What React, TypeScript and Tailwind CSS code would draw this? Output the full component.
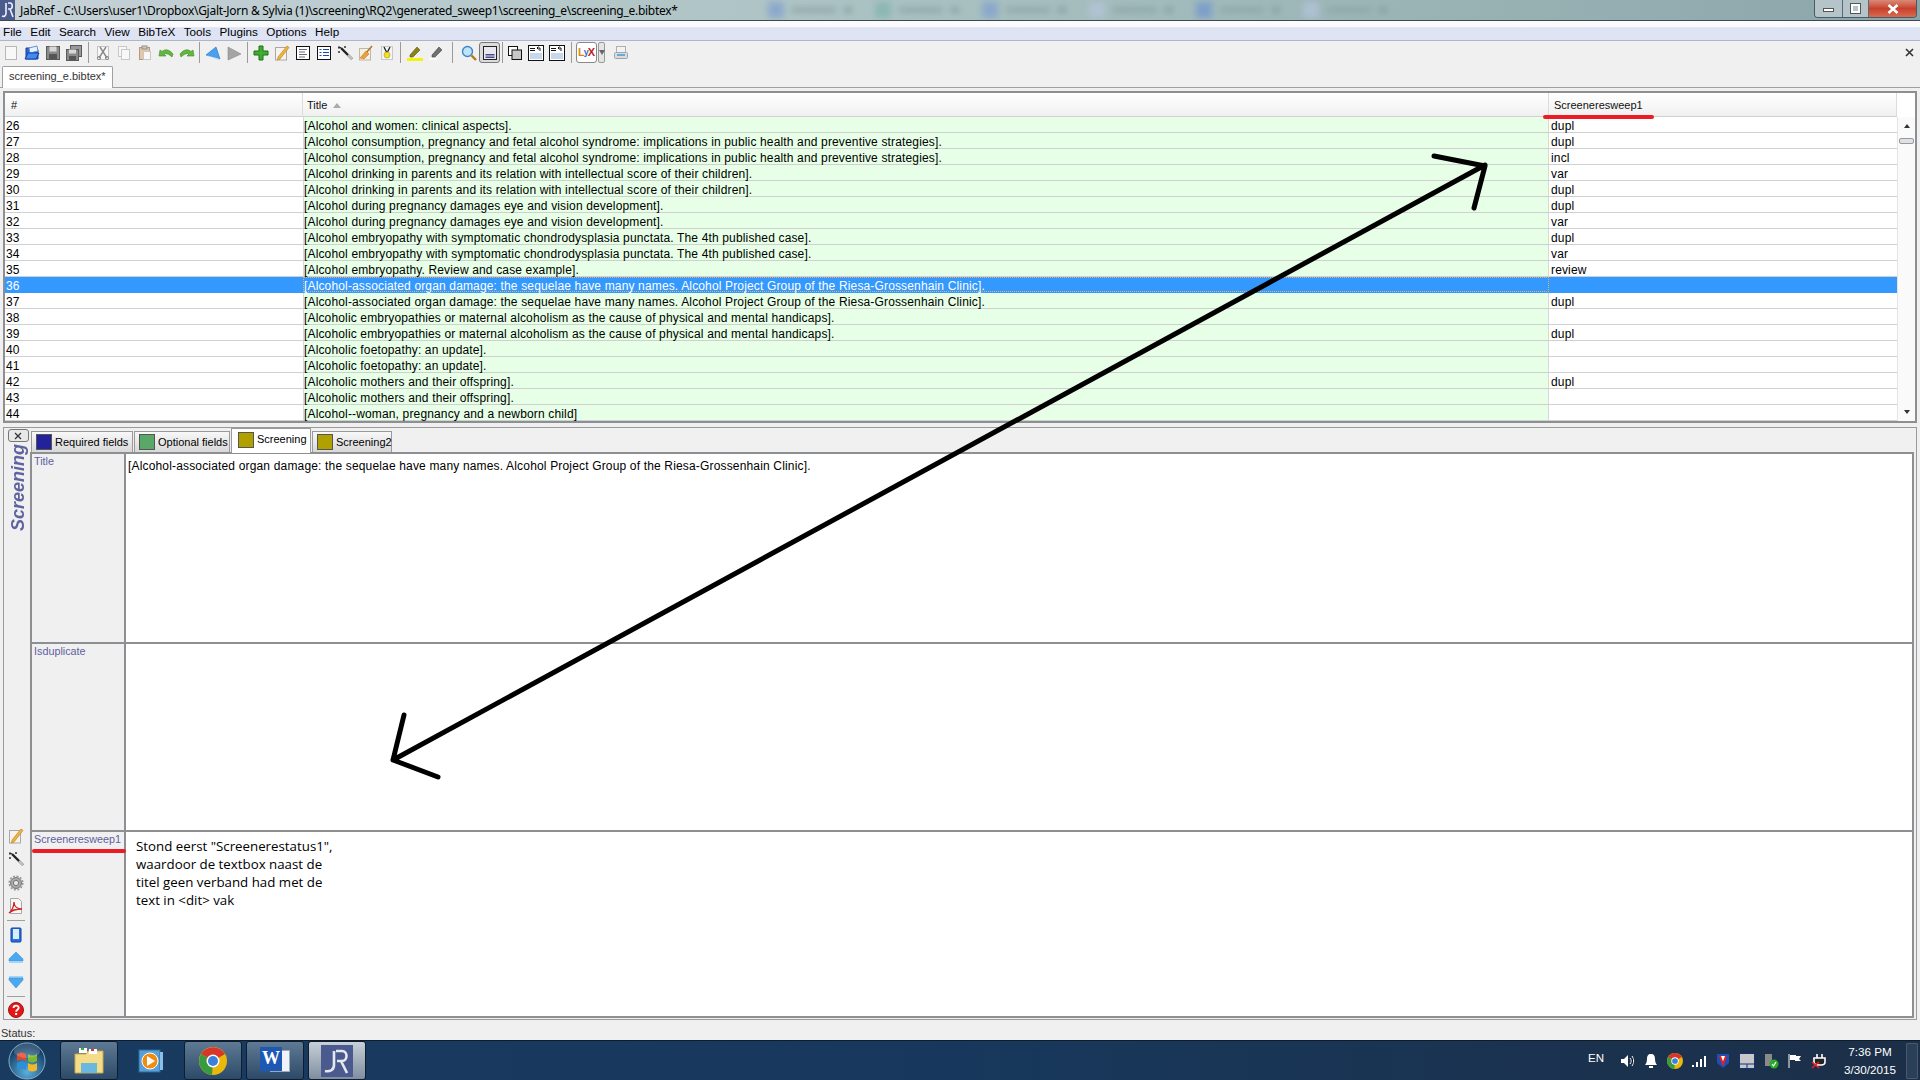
import type { ReactNode } from "react";

// Table rows: number, title and the Screeneresweep1 value
const rows: [number, string, string][] = [
  [26, "[Alcohol and women: clinical aspects].", "dupl"],
  [27, "[Alcohol consumption, pregnancy and fetal alcohol syndrome: implications in public health and preventive strategies].", "dupl"],
  [28, "[Alcohol consumption, pregnancy and fetal alcohol syndrome: implications in public health and preventive strategies].", "incl"],
  [29, "[Alcohol drinking in parents and its relation with intellectual score of their children].", "var"],
  [30, "[Alcohol drinking in parents and its relation with intellectual score of their children].", "dupl"],
  [31, "[Alcohol during pregnancy damages eye and vision development].", "dupl"],
  [32, "[Alcohol during pregnancy damages eye and vision development].", "var"],
  [33, "[Alcohol embryopathy with symptomatic chondrodysplasia punctata. The 4th published case].", "dupl"],
  [34, "[Alcohol embryopathy with symptomatic chondrodysplasia punctata. The 4th published case].", "var"],
  [35, "[Alcohol embryopathy. Review and case example].", "review"],
  [36, "[Alcohol-associated organ damage: the sequelae have many names. Alcohol Project Group of the Riesa-Grossenhain Clinic].", ""],
  [37, "[Alcohol-associated organ damage: the sequelae have many names. Alcohol Project Group of the Riesa-Grossenhain Clinic].", "dupl"],
  [38, "[Alcoholic embryopathies or maternal alcoholism as the cause of physical and mental handicaps].", ""],
  [39, "[Alcoholic embryopathies or maternal alcoholism as the cause of physical and mental handicaps].", "dupl"],
  [40, "[Alcoholic foetopathy: an update].", ""],
  [41, "[Alcoholic foetopathy: an update].", ""],
  [42, "[Alcoholic mothers and their offspring].", "dupl"],
  [43, "[Alcoholic mothers and their offspring].", ""],
  [44, "[Alcohol--woman, pregnancy and a newborn child]", ""],
];

const menus = ["File", "Edit", "Search", "View", "BibTeX", "Tools", "Plugins", "Options", "Help"];

// Small wrapper so every drawn icon shares one 16x16 grid
function Ico({ children, size = 16 }: { children: ReactNode; size?: number }) {
  return (
    <svg width={size} height={size} viewBox="0 0 16 16" fill="none">
      {children}
    </svg>
  );
}

const Sheet = ({ x = 2.5, y = 1.5, w = 11, h = 13, c = "#b8b8b8", f = "#f8f8f8" }) => (
  <rect x={x} y={y} width={w} height={h} fill={f} stroke={c} />
);

const icons = {
  newFile: <Sheet />,
  open: (
    <>
      <path d="M2 3h5l1 2h6v9H2z" fill="#2a66d8" stroke="#1a3fa0" />
      <path d="M5 3l8-2 1 5-8 2z" fill="#e8f2ff" stroke="#6a90d0" />
      <path d="M4 8h11l-3 6H1z" fill="#3d8cf0" stroke="#1a3fa0" />
    </>
  ),
  save: (
    <>
      <rect x="1.5" y="1.5" width="13" height="13" fill="#8a8a8a" stroke="#5a5a5a" />
      <rect x="4.5" y="1.5" width="7" height="5" fill="#d8d8d8" />
      <rect x="4" y="9" width="8" height="5" fill="#555" />
    </>
  ),
  saveAll: (
    <>
      <rect x="4.5" y="0.5" width="11" height="11" fill="#999" stroke="#5a5a5a" />
      <rect x="0.5" y="4.5" width="12" height="11" fill="#8a8a8a" stroke="#5a5a5a" />
      <rect x="3" y="4.5" width="7" height="4" fill="#d8d8d8" />
      <rect x="3" y="11" width="7" height="4" fill="#555" />
    </>
  ),
  cut: (
    <>
      <Sheet c="#c4c4c4" />
      <path d="M5 2l7 11M11 2L4 13" stroke="#8a8a8a" strokeWidth="1.4" />
      <circle cx="4" cy="13" r="1.6" stroke="#8a8a8a" />
      <circle cx="12" cy="13" r="1.6" stroke="#8a8a8a" />
    </>
  ),
  copy: (
    <>
      <Sheet x={2.5} y={1.5} w={8} h={10} c="#c8c8c8" />
      <Sheet x={5.5} y={4.5} w={8} h={10} c="#c8c8c8" />
    </>
  ),
  paste: (
    <>
      <rect x="2.5" y="2.5" width="10" height="12" fill="#e4c8a8" stroke="#b89878" />
      <rect x="5" y="1" width="5" height="3" fill="#c8c8c8" stroke="#909090" />
      <Sheet x={6.5} y={6.5} w={7} h={8} c="#c8c8c8" />
    </>
  ),
  undo: <path d="M1 11l1-6 2 1.5C7 4 11 4 15 9l-1 3c-3-3-6-4-8-3l2 2z" fill="#62b83e" stroke="#3e8a2a" strokeWidth="0.6" />,
  redo: <path d="M15 11l-1-6-2 1.5C9 4 5 4 1 9l1 3c3-3 6-4 8-3l-2 2z" fill="#62b83e" stroke="#3e8a2a" strokeWidth="0.6" />,
  back: (
    <>
      <path d="M1 10L11 2l4 12z" fill="#4aa0ec" stroke="#2a78c8" strokeWidth="0.7" />
      <path d="M1 10l14 4-2 1z" fill="#bfe0fa" />
    </>
  ),
  forward: <path d="M2 2l13 7-13 6z" fill="#a4a4a4" stroke="#8c8c8c" strokeWidth="0.6" />,
  add: <path d="M6 1h4v5h5v4h-5v5H6v-5H1V6h5z" fill="#3fae2e" stroke="#1c6e1c" />,
  edit: (
    <>
      <rect x="1.5" y="2.5" width="11" height="12.5" fill="#f6f4ec" stroke="#a8a8a8" />
      <path d="M4 12L13 1l2 1.5L6 14l-2.5 1z" fill="#f0b63c" stroke="#b07a18" strokeWidth="0.6" />
    </>
  ),
  lines: (
    <>
      <rect x="1.5" y="1.5" width="13" height="13" fill="#fff" stroke="#111" />
      <path d="M4 4.5h8M4 7h6M4 9.5h8M4 12h6" stroke="#6a6a7a" />
    </>
  ),
  table: (
    <>
      <rect x="1.5" y="1.5" width="13" height="13" fill="#fff" stroke="#111" />
      <path d="M3.5 4.5h2M7 4.5h6M3.5 7.5h2M7 7.5h6M3.5 10.5h2M7 10.5h6" stroke="#1a4aa8" />
    </>
  ),
  wand: (
    <>
      <path d="M4 3l11 11" stroke="#222" strokeWidth="2.4" />
      <path d="M11 10l4 4" stroke="#ccc" strokeWidth="2" />
      <path d="M2 1v3M1 2.5h3M8 1v2M7 2h2M1 7h2M2 6v2" stroke="#333" />
    </>
  ),
  broom: (
    <>
      <rect x="1.5" y="3.5" width="11" height="11.5" fill="#f4f0e4" stroke="#c0b8a0" />
      <path d="M14 1L8 8" stroke="#b07830" strokeWidth="1.6" />
      <path d="M8 6l3 3-5 5-4-1z" fill="#e8a040" stroke="#b87820" strokeWidth="0.5" />
    </>
  ),
  cleanup: (
    <>
      <rect x="2.5" y="1.5" width="11" height="13" fill="#f4f4f4" stroke="#c8c8c8" />
      <path d="M5 2l3 6 3-6" stroke="#222" strokeWidth="1.3" />
      <circle cx="8" cy="10" r="3" fill="#f4e020" stroke="#a89a10" strokeWidth="0.6" />
    </>
  ),
  mark: (
    <>
      <path d="M3 10l7-8 3 3-7 7H3z" fill="#8a8418" stroke="#5a5410" strokeWidth="0.6" />
      <rect x="0" y="13" width="16" height="3" fill="#f2f20a" />
    </>
  ),
  unmark: (
    <>
      <path d="M4 10l7-8 3 3-7 7H4z" fill="#707070" stroke="#444" strokeWidth="0.6" />
      <rect x="1" y="13" width="8" height="2" fill="#fafafa" />
    </>
  ),
  search: (
    <>
      <circle cx="6.5" cy="6.5" r="5" fill="#bfe4fa" stroke="#3a88c8" strokeWidth="1.4" />
      <path d="M10.5 10.5l4.5 4.5" stroke="#b87818" strokeWidth="2.4" />
    </>
  ),
  preview: (
    <>
      <rect x="1.5" y="1.5" width="13" height="13" fill="#e8e8f0" stroke="#222" />
      <path d="M3.5 9.5h9M3.5 11h9M3.5 12.5h9" stroke="#4a4a8a" />
    </>
  ),
  stack: (
    <>
      <rect x="1.5" y="1.5" width="9" height="9" fill="#fff" stroke="#111" />
      <rect x="5" y="5" width="9.5" height="9.5" fill="#c8c8c8" stroke="#111" />
    </>
  ),
  prev: (
    <>
      <rect x="0.5" y="0.5" width="15" height="15" fill="#fff" stroke="#111" />
      <path d="M2 3.5h5M2 5.5h5" stroke="#111" />
      <path d="M12 6V3H9m1.5-1.5L9 3l1.5 1.5" stroke="#111" />
      <path d="M2 9h12M2 11h12M2 13h12" stroke="#8ab0e0" />
    </>
  ),
  print: (
    <>
      <rect x="3.5" y="1.5" width="9" height="6" fill="#f2f2f2" stroke="#b0b0b0" />
      <rect x="1.5" y="7.5" width="13" height="6" rx="1" fill="#d8dce0" stroke="#a0a4a8" />
      <rect x="4" y="9" width="8" height="2" fill="#6aa8d8" />
    </>
  ),
  settings: (
    <>
      <circle cx="8" cy="8" r="5.5" fill="#a8a8a8" stroke="#777" />
      <circle cx="8" cy="8" r="6.8" stroke="#999" strokeWidth="1.6" strokeDasharray="2 1.6" />
      <circle cx="8" cy="8" r="2.6" fill="#e8e8e8" stroke="#777" />
    </>
  ),
  pdf: (
    <>
      <path d="M2.5.5h8l3 3v12h-11z" fill="#f6f6f6" stroke="#a8a8a8" />
      <path d="M1 15c3-2 5-7 5-11 0 4 3 7 8 7-5 0-10 1-13 4z" stroke="#d0201c" strokeWidth="1.3" />
    </>
  ),
  page: (
    <>
      <rect x="3" y="1" width="10" height="14" rx="1" fill="#2a70e0" stroke="#1040a0" />
      <rect x="5" y="2" width="6" height="10" fill="#d8ecfc" />
    </>
  ),
  up: (
    <>
      <path d="M8 2l7 7v2H1V9z" fill="#4aa8f0" stroke="#3a90d8" strokeWidth="0.6" />
      <rect x="1" y="11" width="14" height="2" fill="#a8d4f4" />
    </>
  ),
  down: (
    <>
      <rect x="1" y="2" width="14" height="2" fill="#a8d4f4" />
      <path d="M1 4h14v2l-7 8-7-8z" fill="#4aa8f0" stroke="#3a90d8" strokeWidth="0.6" />
    </>
  ),
  help: (
    <>
      <circle cx="8" cy="8" r="7.5" fill="#e01818" stroke="#a81010" />
      <path d="M5.5 6c0-3.2 5.2-3.2 5.2-.2 0 2-2.6 2-2.6 4" stroke="#fff" strokeWidth="1.8" />
      <rect x="7.1" y="11" width="2" height="2" fill="#fff" />
    </>
  ),
};

function ToolBtn({ icon, framed = false }: { icon: ReactNode; framed?: boolean }) {
  return (
    <div
      className={`w-[21px] h-[21px] flex items-center justify-center shrink-0 ${
        framed ? "border border-[#777] rounded-[3px] bg-[#dcdcdc]" : ""
      }`}
    >
      <Ico>{icon}</Ico>
    </div>
  );
}

// Toolbar separator: w decides the space around the 1px line
function Sep({ w }: { w: string }) {
  return (
    <div className={`${w} h-[21px] flex justify-center shrink-0`}>
      <div className="w-px h-full bg-[#9a9a9a]" />
    </div>
  );
}

function Toolbar() {
  return (
    <div className="h-[25px] pb-[2px] flex items-center shrink-0 bg-[#f0f0f0]">
      <ToolBtn icon={icons.newFile} />
      <ToolBtn icon={icons.open} />
      <ToolBtn icon={icons.save} />
      <ToolBtn icon={icons.saveAll} />
      <Sep w="w-[8px]" />
      <ToolBtn icon={icons.cut} />
      <ToolBtn icon={icons.copy} />
      <ToolBtn icon={icons.paste} />
      <ToolBtn icon={icons.undo} />
      <ToolBtn icon={icons.redo} />
      <Sep w="w-[5px]" />
      <ToolBtn icon={icons.back} />
      <ToolBtn icon={icons.forward} />
      <Sep w="w-[6px]" />
      <ToolBtn icon={icons.add} />
      <ToolBtn icon={icons.edit} />
      <ToolBtn icon={icons.lines} />
      <ToolBtn icon={icons.table} />
      <ToolBtn icon={icons.wand} />
      <ToolBtn icon={icons.broom} />
      <ToolBtn icon={icons.cleanup} />
      <Sep w="w-[7px]" />
      <ToolBtn icon={icons.mark} />
      <ToolBtn icon={icons.unmark} />
      <Sep w="w-[12px]" />
      <ToolBtn icon={icons.search} />
      <ToolBtn icon={icons.preview} framed />
      <Sep w="w-[4px]" />
      <ToolBtn icon={icons.stack} />
      <ToolBtn icon={icons.prev} />
      <ToolBtn icon={icons.prev} />
      <Sep w="w-[9px]" />
      <div className="w-[21px] h-[21px] border border-[#888] rounded-[3px] bg-white flex items-center justify-center text-[11px] font-bold leading-none shrink-0">
        <span className="text-[#d88a10]">L</span>
        <span className="text-[#3a6ac8] text-[9px] -mx-[1px]">y</span>
        <span className="text-[#c02020]">X</span>
      </div>
      <div className="w-[7px] h-[21px] ml-[1px] border border-[#999] rounded-[2px] bg-[#e4e4e4] flex items-center justify-center shrink-0">
        <div className="w-0 h-0 border-x-[3px] border-x-transparent border-t-[5px] border-t-[#666]" />
      </div>
      <div className="ml-[5px]">
        <ToolBtn icon={icons.print} />
      </div>
      <svg className="ml-auto mr-[6px]" width="9" height="9" viewBox="0 0 9 9">
        <path d="M1 1l7 7M8 1L1 8" stroke="#333" strokeWidth="1.6" />
      </svg>
    </div>
  );
}

function TitleBar() {
  const spots = ["#7f9fd0", "#7fb4ac", "#7f9fd0", "#b4c6dc", "#6f95d0", "#b4c6dc"];
  return (
    <div className="relative h-[21px] shrink-0 flex items-center overflow-hidden border-b border-[#3c4a50] bg-gradient-to-r from-[#c6d2d8] via-[#a8c0c0] to-[#8ba6aa]">
      <svg className="shrink-0" width="15" height="20" viewBox="0 0 15 20">
        <rect width="15" height="20" fill="#4a5a8a" />
        <path d="M6 3v10c0 3-2 4-4 3M8 3h2c3 0 3 6 0 6H8M10 9l3 8" stroke="#eef" strokeWidth="1.6" fill="none" />
      </svg>
      <span className="ml-[5px] pt-[1px] text-[12px] text-black whitespace-nowrap font-['Noto_Sans',sans-serif] tracking-[-0.28px]">
        JabRef - C:\Users\user1\Dropbox\Gjalt-Jorn &amp; Sylvia (1)\screening\RQ2\generated_sweep1\screening_e\screening_e.bibtex*
      </span>
      <div className="absolute left-[768px] top-[2px] flex blur-[3px] opacity-70">
        {spots.map((c, i) => (
          <div key={i} className="w-[107px] flex items-center gap-[8px]">
            <div className="w-[16px] h-[16px]" style={{ background: c }} />
            <div className="w-[44px] h-[6px] bg-[#8aa2a6]" />
            <div className="w-[8px] h-[6px] bg-[#7e9699]" />
          </div>
        ))}
      </div>
      <div className="absolute right-[3px] top-0 h-[18px] flex border border-t-0 border-[#4a5a60] rounded-b-[4px] overflow-hidden">
        <div className="w-[28px] flex items-center justify-center bg-[#b4c4c8] border-r border-[#5a6a70]">
          <div className="w-[11px] h-[4px] mt-[3px] bg-white border border-[#555]" />
        </div>
        <div className="w-[26px] flex items-center justify-center bg-[#b4c4c8] border-r border-[#5a6a70]">
          <div className="w-[9px] h-[9px] border-2 border-white outline outline-1 outline-[#555]" />
        </div>
        <div className="w-[47px] flex items-center justify-center bg-gradient-to-b from-[#d88a78] via-[#c8402c] to-[#d86a50]">
          <svg width="12" height="10" viewBox="0 0 12 10">
            <path d="M1.5 1l9 8M10.5 1l-9 8" stroke="#fff" strokeWidth="2.6" />
          </svg>
        </div>
      </div>
    </div>
  );
}

function MenuBar() {
  return (
    <div className="h-[20px] shrink-0 flex items-center gap-[8.5px] pl-[3px] pt-[2px] text-[11.7px] text-black border-b border-[#aeb6c8] bg-gradient-to-b from-[#fbfbfd] from-30% to-[#dfe4f4] to-35%">
      {menus.map((m) => (
        <span key={m}>{m}</span>
      ))}
    </div>
  );
}

function EntryTable() {
  return (
    <div className="mt-[3px] mx-[3px] h-[332px] border-2 border-[#8e8f92] flex flex-col shrink-0 bg-white">
      <div className="h-[24px] flex shrink-0 text-[11px] text-[#111] relative z-10">
        <div className="w-[298px] pl-[6px] pt-[2px] flex items-center border-r border-[#dcdcdc] border-b border-b-[#d0d0d0] bg-gradient-to-b from-white to-[#f0f0f0]">#</div>
        <div className="w-[1246px] pl-[4px] pt-[2px] flex items-center gap-[6px] border-r border-[#dcdcdc] border-b border-b-[#d0d0d0] bg-gradient-to-b from-white to-[#f0f0f0]">
          Title
          <div className="w-0 h-0 border-x-[4px] border-x-transparent border-b-[5px] border-b-[#aaa]" />
        </div>
        <div className="relative w-[348px] pl-[5px] pt-[2px] flex items-center border-r border-[#dcdcdc] border-b border-b-[#d0d0d0] bg-gradient-to-b from-white to-[#f0f0f0]">
          Screeneresweep1
          <div className="absolute left-[-6px] bottom-[-3px] w-[111px] h-[4px] rounded-full bg-[#ed1c24]" />
        </div>
      </div>
      <div className="flex-1 flex min-h-0">
        <div className="w-[1892px]">
          {rows.map(([n, title, value]) => {
            const selected = n === 36;
            return (
              <div
                key={n}
                className={`h-[16px] flex text-[12px] leading-[15px] tracking-[0.15px] border-b ${
                  selected ? "bg-[#3399ff] text-white border-[#3399ff]" : "text-black border-[#d0d0d0]"
                }`}
              >
                <div className="w-[298px] pl-[1px] pt-[2px] leading-[14px]">{n}</div>
                <div
                  className={`w-[1246px] whitespace-nowrap ${
                    selected ? "border border-dotted border-[#e8b070] pt-[1px] leading-[14px]" : "bg-[#e6ffe6] border-l border-r border-[#d8d8d8] pt-[2px] leading-[14px]"
                  }`}
                >
                  {title}
                </div>
                <div className="w-[348px] pl-[2px] pt-[2px] leading-[14px]">{value}</div>
              </div>
            );
          })}
        </div>
        {/* Scrollbar */}
        <div className="flex-1 relative flex flex-col items-center justify-between py-[7px] bg-[#fafafa] border-l border-[#e4e4e4]">
          <div className="w-0 h-0 border-x-[3px] border-x-transparent border-b-[4px] border-b-[#333]" />
          <div className="absolute top-[21px] left-[1px] right-[1px] h-[6px] rounded-[2px] border border-[#999] bg-[#dde0e4]" />
          <div className="w-0 h-0 border-x-[3px] border-x-transparent border-t-[4px] border-t-[#333]" />
        </div>
      </div>
    </div>
  );
}

function FieldTab({ color, label, active, w }: { color: string; label: string; active?: boolean; w: string }) {
  return (
    <div
      className={`${w} shrink-0 flex items-center gap-[2px] text-[11px] border border-[#9a9a9a] border-b-0 ${
        active ? "h-[25px] pl-[6px] pb-[3px] bg-white relative z-10" : "h-[21px] mt-[3px] pl-[4px] bg-gradient-to-b from-[#f8f8f8] to-[#d8d8d8]"
      }`}
    >
      <div className="w-[16px] h-[16px] border border-[#555] shrink-0" style={{ background: color }} />
      <span className="pl-[1px] whitespace-nowrap">{label}</span>
    </div>
  );
}

function FieldRow({ label, first, last, mark, children }: { label: string; first?: boolean; last?: boolean; mark?: boolean; children?: ReactNode }) {
  return (
    <div className={`flex ${last ? "flex-1" : first ? "h-[190px] border-b-2 border-[#8e8f92]" : "h-[188px] border-b-2 border-[#8e8f92]"}`}>
      <div className="relative w-[94px] shrink-0 bg-[#f0f0f0] pl-[2px] pt-[1px] text-[10.8px] leading-[13px] text-[#5f5f9f] border-r-2 border-[#8e8f92]">
        {label}
        {mark && <div className="absolute left-0 top-[17px] w-[94px] h-[4px] rounded-full bg-[#ed1c24]" />}
      </div>
      <div className="flex-1 bg-white">{children}</div>
    </div>
  );
}

function RailBtn({ icon }: { icon: ReactNode }) {
  return (
    <div className="h-[23.5px] flex items-center justify-center">
      <Ico>{icon}</Ico>
    </div>
  );
}

function EntryEditor() {
  return (
    <div className="mt-[4px] mx-[3px] h-[593px] border border-[#9a9a9a] flex shrink-0 bg-[#f0f0f0]">
      {/* Left rail with the vertical panel name and the entry actions */}
      <div className="w-[26px] shrink-0 flex flex-col items-center">
        <div className="mt-[1px] w-[21px] h-[13px] ml-[2px] border border-[#777] rounded-[3px] bg-[#e8e8e8] flex items-center justify-center">
          <svg width="8" height="8" viewBox="0 0 8 8">
            <path d="M1 1l6 6M7 1L1 7" stroke="#333" strokeWidth="1.3" />
          </svg>
        </div>
        <div className="h-[90px] flex justify-center text-[18px] leading-[20px] font-bold italic text-[#5f639f] [writing-mode:vertical-rl] rotate-180 ml-[1px]">
          Screening
        </div>
        <div className="mt-auto -mb-[3px] w-full flex flex-col pr-[2px]">
          <RailBtn icon={icons.edit} />
          <RailBtn icon={icons.wand} />
          <RailBtn icon={icons.settings} />
          <RailBtn icon={icons.pdf} />
          <div className="mx-[3px] my-[2px] h-px bg-[#a0a0a0]" />
          <RailBtn icon={icons.page} />
          <RailBtn icon={icons.up} />
          <RailBtn icon={icons.down} />
          <div className="mx-[3px] my-[2px] h-px bg-[#a0a0a0]" />
          <RailBtn icon={icons.help} />
        </div>
      </div>
      <div className="flex-1 min-w-0 flex flex-col">
        <div className="h-[24px] shrink-0 flex pl-[1px] gap-[1px]">
          <FieldTab color="#22229a" label="Required fields" w="w-[102px]" />
          <FieldTab color="#5aa868" label="Optional fields" w="w-[96px]" />
          <FieldTab color="#b0a000" label="Screening" active w="w-[80px]" />
          <FieldTab color="#b0a000" label="Screening2" w="w-[80px]" />
        </div>
        <div className="flex-1 min-h-0 mb-[1px] mr-[2px] border-2 border-[#8e8f92] flex flex-col">
          <FieldRow label="Title" first>
            <p className="pl-[2px] pt-[5px] text-[12px] leading-[15px] tracking-[0.165px] text-black whitespace-nowrap">
              [Alcohol-associated organ damage: the sequelae have many names. Alcohol Project Group of the Riesa-Grossenhain Clinic].
            </p>
          </FieldRow>
          <FieldRow label="Isduplicate" />
          <FieldRow label="Screeneresweep1" last mark>
            <p className="pl-[10px] pt-[5px] text-[13.3px] leading-[18px] text-black font-['Open_Sans',sans-serif]">
              Stond eerst "Screenerestatus1",
              <br />
              waardoor de textbox naast de
              <br />
              titel geen verband had met de
              <br />
              text in &lt;dit&gt; vak
            </p>
          </FieldRow>
        </div>
      </div>
    </div>
  );
}

function TaskBtn({ active, children }: { active?: boolean; children: ReactNode }) {
  return (
    <div
      className={`w-[58px] h-[39px] flex items-center justify-center rounded-[3px] border border-[#0e1e30] ${
        active ? "bg-gradient-to-b from-[#c8d0d8] to-[#7f8ea0]" : "bg-gradient-to-b from-[#5f7a94] to-[#2c4a68]"
      }`}
    >
      {children}
    </div>
  );
}

const chromeLogo = (size: number) => (
  <svg width={size} height={size} viewBox="0 0 28 28">
    <circle cx="14" cy="14" r="14" fill="#e8b80c" />
    <path d="M14 14L2 7a14 14 0 0 1 24 0z" fill="#d8362a" />
    <path d="M14 14L2 7a14 14 0 0 0 11 21z" fill="#3a9a3e" />
    <circle cx="14" cy="14" r="6.5" fill="#fff" />
    <circle cx="14" cy="14" r="5" fill="#3d7fdc" />
  </svg>
);

function Taskbar() {
  return (
    <div className="h-[40px] shrink-0 flex items-center border-t border-[#0e1c2c] bg-gradient-to-r from-[#1a3b60] via-[#17385c] to-[#1c2f48] text-white">
      {/* Start orb */}
      <div className="w-[60px] shrink-0 flex justify-start pl-[8px]">
        <svg width="38" height="38" viewBox="0 0 38 38">
          <defs>
            <radialGradient id="orb" cx="50%" cy="80%" r="70%">
              <stop offset="0%" stopColor="#5ab0e0" />
              <stop offset="100%" stopColor="#123a60" />
            </radialGradient>
          </defs>
          <circle cx="19" cy="19" r="18" fill="url(#orb)" stroke="#8ab0c8" />
          <path d="M9 12c3-2 6-2 9 0v7c-3-2-6-2-9 0z" fill="#e0482a" />
          <path d="M20 12c3 2 6 2 9 0v7c-3 2-6 2-9 0z" fill="#7cb82c" />
          <path d="M9 21c3-2 6-2 9 0v7c-3-2-6-2-9 0z" fill="#2a90d8" />
          <path d="M20 21c3 2 6 2 9 0v7c-3 2-6 2-9 0z" fill="#f0b82a" />
          <ellipse cx="19" cy="9" rx="13" ry="7" fill="#fff" opacity="0.18" />
        </svg>
      </div>
      <TaskBtn>
        <svg width="32" height="30" viewBox="0 0 32 30">
          <path d="M2 8h11l2-3h15v22H2z" fill="#f4dc88" stroke="#c8a850" />
          <path d="M6 2h8v5H6zM16 3h8v5h-8z" fill="#fff" />
          <path d="M8 2h3v2H8z" fill="#3aa83a" />
          <path d="M18 3h3v2h-3z" fill="#d83a2a" />
          <path d="M8 17h16v10H8z" fill="#6ab8e0" />
        </svg>
      </TaskBtn>
      <div className="w-[66px] flex justify-center">
        <svg width="26" height="26" viewBox="0 0 26 26">
          <rect x="1" y="2" width="21" height="22" fill="#5aa0d8" stroke="#2a6aa0" />
          <rect x="22" y="4" width="3" height="18" fill="#8ac0e8" />
          <circle cx="12" cy="13" r="8" fill="#f08c10" stroke="#fff" />
          <path d="M9 8l8 5-8 5z" fill="#fff" />
        </svg>
      </div>
      <TaskBtn>{chromeLogo(28)}</TaskBtn>
      <div className="w-[4px]" />
      <TaskBtn>
        <div className="relative w-[30px] h-[28px]">
          <div className="absolute right-0 top-[3px] w-[20px] h-[22px] bg-[#eef4fa] border border-[#9ab]" />
          <div className="absolute left-0 top-0 w-[22px] h-[24px] bg-[#1c58b4] flex items-center justify-center text-[18px] font-bold font-['Liberation_Serif',serif] text-white">W</div>
        </div>
      </TaskBtn>
      <div className="w-[4px]" />
      <TaskBtn active>
        <svg width="32" height="32" viewBox="0 0 32 32">
          <rect width="32" height="32" fill="#4a5a8e" />
          <path d="M13 6v14c0 5-4 7-9 6M15 6h6c6 0 6 10 0 10h-5M20 16l6 12" stroke="#e6e8f0" strokeWidth="2.6" fill="none" />
        </svg>
      </TaskBtn>
      {/* Notification area */}
      <div className="ml-auto flex items-center h-full">
        <span className="text-[11.5px] mb-[4px] mr-[15px]">EN</span>
        <div className="flex items-center gap-[8px]">
          <svg width="16" height="16" viewBox="0 0 16 16">
            <path d="M2 6h3l4-4v12l-4-4H2z" fill="#fff" />
            <path d="M11 5c1.5 2 1.5 4 0 6M13 3c2 3 2 7 0 10" stroke="#fff" />
          </svg>
          <svg width="16" height="16" viewBox="0 0 16 16">
            <path d="M8 1c3 0 4 2 4 5s1 5 2 6H2c1-1 2-3 2-6s1-5 4-5z" fill="#fff" />
            <rect x="6" y="13" width="4" height="2" fill="#fff" />
          </svg>
          {chromeLogo(16)}
          <svg width="16" height="16" viewBox="0 0 16 16">
            <path d="M1 14h2v-2H1zM5 14h2V9H5zM9 14h2V6H9zM13 14h2V3h-2z" fill="#fff" />
          </svg>
          <svg width="16" height="16" viewBox="0 0 16 16">
            <path d="M2 1h12v9l-6 5-6-5z" fill="#1c4fb8" />
            <path d="M5 3l3 8 3-8" stroke="#e82020" strokeWidth="2" fill="#fff" />
          </svg>
          <svg width="16" height="16" viewBox="0 0 16 16">
            <rect x="0.5" y="0.5" width="15" height="15" fill="#c8c8c8" stroke="#16307c" />
            <path d="M1 11h14M8 11v4" stroke="#16307c" />
          </svg>
          <svg width="16" height="16" viewBox="0 0 16 16">
            <rect x="2" y="1" width="7" height="12" fill="#8a8a8a" />
            <circle cx="11" cy="11" r="4.5" fill="#2aa82a" />
            <path d="M9 11l1.5 2 2.5-4" stroke="#fff" strokeWidth="1.2" fill="none" />
          </svg>
          <svg width="16" height="16" viewBox="0 0 16 16">
            <path d="M2 1v14" stroke="#fff" />
            <path d="M3 2h6v1h5l-2 3 2 2H8V7H3z" fill="#fff" />
          </svg>
          <svg width="16" height="16" viewBox="0 0 16 16">
            <path d="M6 1v4M11 1v4M3 5h11v4c0 2-2 3-4 3H8C5 12 3 11 3 9z" stroke="#fff" strokeWidth="1.6" fill="#222" />
            <path d="M1 9l7 6M8 9l-7 6" stroke="#e82020" strokeWidth="1.6" />
          </svg>
        </div>
        <div className="ml-[9px] w-[68px] text-center text-[11.7px] leading-[18px]">
          <div>7:36 PM</div>
          <div>3/30/2015</div>
        </div>
        <div className="ml-[2px] mr-[2px] w-[12px] h-[36px] border border-[#4a5a6a] bg-[#2a4058] rounded-[1px]" />
      </div>
    </div>
  );
}

export default function App() {
  return (
    <div className="relative w-[1920px] h-[1080px] overflow-hidden flex flex-col bg-[#f0f0f0] font-['Liberation_Sans',Arial,sans-serif]">
      <TitleBar />
      <MenuBar />
      <Toolbar />

      {/* Document tab */}
      <div className="h-[22px] shrink-0 flex items-end border-b border-[#a0a0a0] pl-[2px]">
        <div className="h-[22px] -mb-px px-[6px] pb-[2px] flex items-center bg-white border border-b-0 border-[#a0a0a0] text-[11px] text-[#333] rounded-t-[2px]">
          screening_e.bibtex*
        </div>
      </div>

      <EntryTable />
      <EntryEditor />

      <div className="flex-1 min-h-0 pl-[1px] pt-[5px] flex items-center text-[11px] leading-[14px] text-[#333] bg-[#f0f0f0]">Status:</div>
      <Taskbar />

      {/* Hand-drawn double arrow on top of the window */}
      <svg className="absolute inset-0 pointer-events-none" width="1920" height="1080" viewBox="0 0 1920 1080" fill="none">
        <path
          d="M393 760L1485 165M1434 156L1485 166L1474 208M404 715L393 760L438 777"
          stroke="#000"
          strokeWidth="5"
          strokeLinecap="round"
          strokeLinejoin="round"
        />
      </svg>
    </div>
  );
}
